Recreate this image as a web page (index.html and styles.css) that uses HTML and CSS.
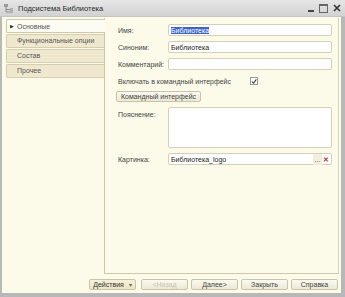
FILE: index.html
```html
<!DOCTYPE html>
<html lang="ru">
<head>
    <meta charset="UTF-8">
    <title>Подсистема Библиотека</title>
    <link rel="stylesheet" href="styles.css">
</head>
<body>
    <div class="window">
        <div class="titlebar">
            <svg class="app-icon" width="11" height="11" viewBox="0 0 11 11">
                <rect x="1" y="1" width="4" height="3" fill="#9a9a9a"/>
                <path d="M3 4 V9 H7 M3 6.5 H7" stroke="#8a8a8a" fill="none"/>
                <rect x="7" y="5" width="3" height="3" fill="#b0b0b0"/>
                <rect x="7" y="8" width="3" height="2" fill="#b0b0b0"/>
            </svg>
            <span class="title">Подсистема Библиотека</span>
            <div class="controls">
                <span class="ctl-min"></span>
                <span class="ctl-max"></span>
                <svg class="ctl-close" width="8" height="8" viewBox="0 0 8 8">
                    <path d="M1 1 L7 7 M7 1 L1 7" stroke="#333" stroke-width="1.6"/>
                </svg>
            </div>
        </div>

        <div class="body">
            <div class="main">
                <div class="tabs">
                    <div class="tab active"><span class="arrow">&#9654;</span>Основные</div>
                    <div class="tab">Функциональные опции</div>
                    <div class="tab">Состав</div>
                    <div class="tab">Прочее</div>
                </div>

                <div class="panel">
                    <div class="row">
                        <label>Имя:</label>
                        <div class="input"><span class="selected">Библиотека</span></div>
                    </div>
                    <div class="row">
                        <label>Синоним:</label>
                        <div class="input">Библиотека</div>
                    </div>
                    <div class="row">
                        <label>Комментарий:</label>
                        <div class="input"></div>
                    </div>
                    <div class="row check-row">
                        <span class="check-label">Включать в командный интерфейс</span>
                        <span class="checkbox">
                            <svg width="7" height="7" viewBox="0 0 7 7">
                                <path d="M1 3.5 L3 5.5 L6.2 1" stroke="#333" stroke-width="1.2" fill="none"/>
                            </svg>
                        </span>
                    </div>
                    <div class="row">
                        <button class="btn cmd-btn">Командный интерфейс</button>
                    </div>
                    <div class="row top">
                        <label>Пояснение:</label>
                        <div class="input textarea"></div>
                    </div>
                    <div class="row">
                        <label>Картинка:</label>
                        <div class="input picker">
                            <span class="value">Библиотека_logo</span>
                            <span class="dots">...</span>
                            <span class="clear">&#10005;</span>
                        </div>
                    </div>
                </div>
            </div>

            <div class="footer">
                <button class="btn actions">Действия <span class="caret">&#9662;</span></button>
                <button class="btn disabled">&lt;Назад</button>
                <button class="btn">Далее&gt;</button>
                <button class="btn">Закрыть</button>
                <button class="btn">Справка</button>
            </div>
        </div>
    </div>
</body>
</html>
```

FILE: styles.css
```css
body, html {
    margin: 0;
    padding: 0;
    height: 100%;
    overflow: hidden;
    font-family: 'Liberation Sans', Arial, sans-serif;
    font-size: 7px;
    color: #444;
}

.window {
    width: 345px;
    height: 297px;
    box-sizing: border-box;
    display: flex;
    flex-direction: column;
    background: #b8b8b8;
}

/* Title bar */
.titlebar {
    height: 17px;
    flex: none;
    display: flex;
    align-items: center;
    padding: 0 4px 0 3px;
    background: linear-gradient(#e6e6e6, #d2d2d2);
    border-bottom: 1px solid #c4c4c4;
    box-sizing: border-box;
}

.app-icon {
    margin-right: 4px;
}

.title {
    font-size: 7.5px;
    color: #2a2a2a;
}

.controls {
    margin-left: auto;
    display: flex;
    align-items: center;
    gap: 5px;
}

.ctl-min {
    width: 6px;
    height: 2px;
    background: #444;
    margin-top: 6px;
}

.ctl-max {
    width: 7px;
    height: 6px;
    border: 1px solid #666;
    border-top-width: 2px;
}

/* Body */
.body {
    flex: 1;
    display: flex;
    flex-direction: column;
    background: #fcfbea;
    margin: 0 4px 4px 2px;
    padding: 1px 2px 3px 4px;
}

.main {
    flex: 1;
    display: flex;
}

.tabs {
    width: 98px;
    flex: none;
    display: flex;
    flex-direction: column;
    gap: 1px;
    padding-top: 1px;
}

.tab {
    height: 12px;
    line-height: 12px;
    padding-left: 10px;
    background: #efe8cf;
    border: 1px solid #d6ceb0;
    border-right: none;
    border-radius: 2px 0 0 2px;
    color: #555;
    white-space: nowrap;
    overflow: hidden;
}

.tab.active {
    background: #fdfcf2;
    padding-left: 3px;
    border-color: #cfc8a8;
    position: relative;
    margin-right: -1px;
    z-index: 1;
}

.arrow {
    font-size: 5px;
    color: #333;
    margin-right: 3px;
    vertical-align: 1px;
}

.panel {
    flex: 1;
    border-left: 1px solid #cfc8a8;
    border-right: 1px solid #d8d2b8;
    border-bottom: 1px solid #cfc8a8;
    padding: 6px 6px 0 13px;
    display: flex;
    flex-direction: column;
    gap: 5px;
}

.row {
    display: flex;
    align-items: center;
}

.row.top {
    align-items: flex-start;
}

.row.top label {
    padding-top: 4px;
}

label {
    width: 50px;
    flex: none;
}

.input {
    flex: 1;
    height: 12px;
    line-height: 11px;
    box-sizing: border-box;
    background: #fff;
    border: 1px solid #d6d0b6;
    border-radius: 2px;
    padding: 0 2px;
    color: #222;
}

.selected {
    background: #3f64c6;
    color: #fff;
}

.check-row {
    margin-top: 2px;
}

.check-label {
    width: 132px;
}

.checkbox {
    width: 8px;
    height: 8px;
    box-sizing: border-box;
    border: 1px solid #9a9a9a;
    background: #fff;
    display: flex;
    align-items: center;
    justify-content: center;
}

.textarea {
    height: 41px;
}

.picker {
    display: flex;
    align-items: center;
    padding-right: 1px;
}

.picker .value {
    flex: 1;
}

.dots {
    color: #555;
    width: 9px;
    background: #f1eedd;
    text-align: center;
}

.clear {
    color: #b03a2e;
    width: 8px;
    text-align: center;
    font-size: 7px;
    font-weight: bold;
}

/* Buttons */
.btn {
    font-family: inherit;
    font-size: 7px;
    color: #444;
    height: 11px;
    padding: 0;
    width: 47px;
    background: linear-gradient(#fbfaf2, #ece8d5);
    border: 1px solid #c9c3a8;
    border-radius: 2px;
    line-height: 9px;
}

.cmd-btn {
    width: 85px;
    height: 11px;
    margin-left: -2px;
    margin-top: 1px;
}

.footer {
    flex: none;
    display: flex;
    justify-content: flex-end;
    gap: 3px;
    padding-top: 5px;
    padding-right: 1px;
}

.btn.actions {
    margin-right: 2px;
    background: linear-gradient(#f6f2da, #ebe4c3);
    color: #333;
}

.caret {
    font-size: 6px;
    color: #666;
    margin-left: 3px;
}

.btn.disabled {
    color: #c8c4b2;
}
```
